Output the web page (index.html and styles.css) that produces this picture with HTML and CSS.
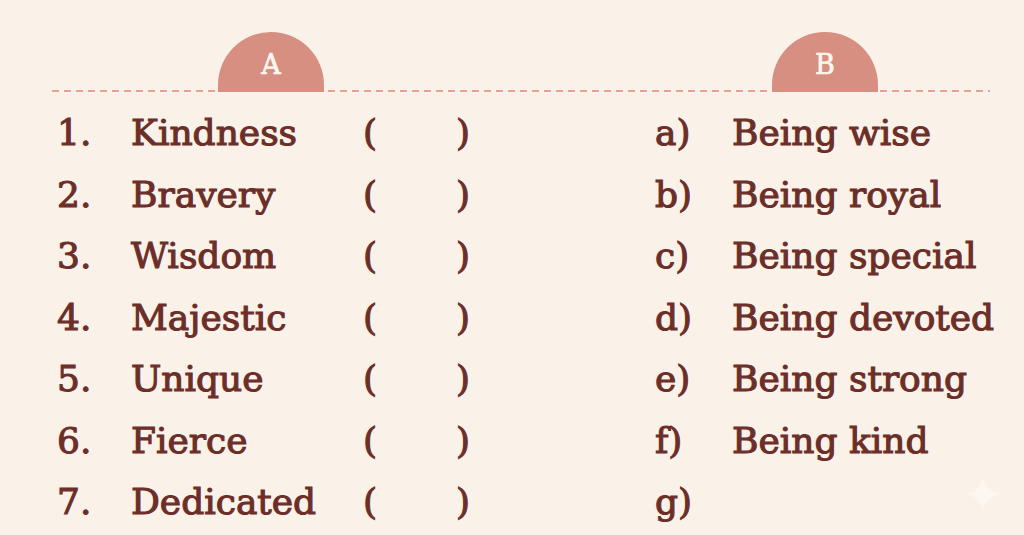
FILE: index.html
```html
<!DOCTYPE html>
<html lang="en">
<head>
<meta charset="utf-8">
<title>Match the columns</title>
<link rel="stylesheet" href="styles.css">
</head>
<body>
<main class="sheet">
  <header class="heads">
    <span class="badge badge-a">A</span>
    <span class="badge badge-b">B</span>
  </header>
  <section class="cols">
    <ol class="col col-a">
      <li class="row"><span class="num">1.</span><span class="word">Kindness</span><span class="blank"><span>(</span><span>)</span></span></li>
      <li class="row"><span class="num">2.</span><span class="word">Bravery</span><span class="blank"><span>(</span><span>)</span></span></li>
      <li class="row"><span class="num">3.</span><span class="word">Wisdom</span><span class="blank"><span>(</span><span>)</span></span></li>
      <li class="row"><span class="num">4.</span><span class="word">Majestic</span><span class="blank"><span>(</span><span>)</span></span></li>
      <li class="row"><span class="num">5.</span><span class="word">Unique</span><span class="blank"><span>(</span><span>)</span></span></li>
      <li class="row"><span class="num">6.</span><span class="word">Fierce</span><span class="blank"><span>(</span><span>)</span></span></li>
      <li class="row"><span class="num">7.</span><span class="word">Dedicated</span><span class="blank"><span>(</span><span>)</span></span></li>
    </ol>
    <ol class="col col-b">
      <li class="row"><span class="let">a)</span><span class="word">Being wise</span></li>
      <li class="row"><span class="let">b)</span><span class="word">Being royal</span></li>
      <li class="row"><span class="let">c)</span><span class="word">Being special</span></li>
      <li class="row"><span class="let">d)</span><span class="word">Being devoted</span></li>
      <li class="row"><span class="let">e)</span><span class="word">Being strong</span></li>
      <li class="row"><span class="let">f)</span><span class="word">Being kind</span></li>
      <li class="row"><span class="let">g)</span><span class="word"></span></li>
    </ol>
  </section>
  <svg class="sparkle" viewBox="0 0 40 40" width="38" height="38" aria-hidden="true">
    <path d="M20 1 C21.5 12 28 18.5 39 20 C28 21.5 21.5 28 20 39 C18.5 28 12 21.5 1 20 C12 18.5 18.5 12 20 1 Z" fill="#fcf7f1"/>
  </svg>
</main>
</body>
</html>
```
FILE: styles.css
```css
html, body {
  margin: 0;
  padding: 0;
}
body {
  background: #faf2e8;
  width: 1024px;
  height: 535px;
  overflow: hidden;
  font-family: "DejaVu Serif", "Liberation Serif", serif;
  color: #6c2e28;
}
.sheet {
  position: relative;
  height: 535px;
  padding: 32px 30px 0 52px;
  box-sizing: border-box;
}
.heads {
  display: flex;
  align-items: flex-end;
  height: 60px;
  margin-right: 4px;
  background-image: linear-gradient(to right, #e4a393 0 7px, transparent 7px 12px);
  background-size: 12px 2px;
  background-repeat: repeat-x;
  background-position: left bottom 0;
}
.badge {
  display: flex;
  justify-content: center;
  width: 106px;
  height: 60px;
  border-radius: 53px 53px 0 0;
  background: #d68f80;
  color: #fdf6ee;
  font-size: 27px;
  line-height: 1;
  padding-top: 19px;
  box-sizing: border-box;
  -webkit-text-stroke: 0.7px #fdf6ee;
}
.badge-a { margin-left: 166px; }
.badge-b { margin-left: 448px; }
.cols {
  display: flex;
  margin-top: 10px;
}
.col {
  list-style: none;
  margin: 0;
  padding: 0;
  flex-shrink: 0;
}
.col-a { margin-left: 5px; width: 598px; }
.row {
  display: flex;
  height: 61.5px;
  line-height: 61.5px;
  font-size: 36px;
  font-weight: 400;
  -webkit-text-stroke: 1.1px #6c2e28;
  white-space: nowrap;
}
.num { width: 74px; }
.col-a .word { width: 232px; }
.blank {
  display: flex;
  justify-content: space-between;
  width: 107px;
}
.let { width: 77px; }
.sparkle {
  position: absolute;
  left: 964px;
  top: 475px;
}
```
